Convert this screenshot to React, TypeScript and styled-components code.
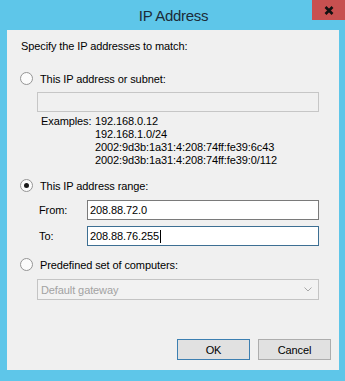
import { FC } from 'react'
import styled, { createGlobalStyle } from 'styled-components'

const GlobalStyle = createGlobalStyle`
  html, body {
    margin: 0;
    padding: 0;
    background: #5ec6e9;
  }
  body {
    font-family: 'Liberation Sans', Arial, sans-serif;
    font-size: 11px;
    letter-spacing: -0.1px;
    color: #000;
  }
`

const Frame = styled.div`
  width: 345px;
  height: 381px;
  background: #5ec6e9;
  display: flex;
  flex-direction: column;
  overflow: hidden;
`

const TitleBar = styled.div`
  height: 30px;
  display: grid;
  grid-template-columns: 1fr auto 1fr;
  align-items: start;
`

const Title = styled.div`
  grid-column: 2;
  font-size: 15px;
  letter-spacing: -0.3px;
  line-height: 15px;
  padding-top: 8px;
  padding-left: 2px;
  color: #1c2b38;
`

const CloseButton = styled.div`
  grid-column: 3;
  justify-self: end;
  width: 33px;
  height: 20px;
  background: #c75050;
  display: flex;
  align-items: center;
  justify-content: center;
`

const Panel = styled.div`
  margin-left: 7px;
  width: 332px;
  height: 340px;
  background: #f0f0f0;
  display: flex;
  flex-direction: column;
  padding-top: 9px;
  box-sizing: border-box;
`

const Text = styled.div<{ $indent?: number; $top?: number }>`
  line-height: 15px;
  margin-left: ${(p) => p.$indent ?? 0}px;
  margin-top: ${(p) => p.$top ?? 0}px;
  white-space: nowrap;
`

const RadioRow = styled.div<{ $top: number }>`
  display: flex;
  align-items: center;
  gap: 7px;
  height: 15px;
  margin-top: ${(p) => p.$top}px;
  margin-left: 13px;
  white-space: nowrap;
`

const RadioCircle = styled.span<{ $checked?: boolean }>`
  width: 13px;
  height: 13px;
  box-sizing: border-box;
  border: 1px solid #959595;
  border-radius: 50%;
  background: #fbfbfb;
  display: flex;
  align-items: center;
  justify-content: center;
  &::after {
    content: '';
    display: ${(p) => (p.$checked ? 'block' : 'none')};
    width: 5px;
    height: 5px;
    border-radius: 50%;
    background: #1a1a1a;
  }
`

const Field = styled.div<{ $variant?: 'disabled' | 'normal' | 'focused'; $top: number; $width: number }>`
  box-sizing: border-box;
  width: ${(p) => p.$width}px;
  height: 20px;
  margin-top: ${(p) => p.$top}px;
  border: 1px solid
    ${(p) =>
      p.$variant === 'focused' ? '#3d6f93' : p.$variant === 'normal' ? '#7a7a7a' : '#c6c6c6'};
  background: ${(p) => (p.$variant === 'disabled' ? '#f0f0f0' : '#ffffff')};
  display: flex;
  align-items: center;
  padding-left: 2px;
  white-space: nowrap;
`

const Caret = styled.span`
  display: inline-block;
  width: 1px;
  height: 13px;
  background: #000;
  margin-left: 1px;
`

const Examples = styled.div`
  display: grid;
  grid-template-columns: 54px auto;
  margin-left: 34px;
  margin-top: 3px;
  line-height: 13px;
`

const ExampleList = styled.div`
  display: flex;
  flex-direction: column;
`

const FormRow = styled.div<{ $top: number }>`
  display: flex;
  align-items: center;
  margin-top: ${(p) => p.$top}px;
  margin-left: 32px;
`

const FormLabel = styled.span`
  width: 48px;
`

const Indented = styled.div`
  margin-left: 30px;
`

const Combo = styled.div`
  box-sizing: border-box;
  width: 282px;
  height: 21px;
  margin-top: 7px;
  margin-left: 30px;
  border: 1px solid #c4c4c4;
  background: #f2f2f2;
  color: #a2a2a2;
  display: flex;
  align-items: center;
  justify-content: space-between;
  padding: 0 6px 0 3px;
`

const ButtonRow = styled.div`
  display: flex;
  justify-content: flex-end;
  gap: 8px;
  margin-top: 39px;
  padding-right: 8px;
`

const Button = styled.div<{ $default?: boolean }>`
  box-sizing: border-box;
  width: 73px;
  height: 21px;
  background: #e1e1e1;
  border: 1px solid ${(p) => (p.$default ? '#3c7fb1' : '#adadad')};
  display: flex;
  align-items: center;
  justify-content: center;
`

const App: FC = () => {
  return (
    <Frame>
      <GlobalStyle />
      <TitleBar>
        <Title>IP Address</Title>
        <CloseButton>
          <svg width="10" height="9" viewBox="0 0 10 9">
            <path d="M1.5 1 L8.5 8 M8.5 1 L1.5 8" stroke="#111" strokeWidth="2.6" />
          </svg>
        </CloseButton>
      </TitleBar>
      <Panel>
        <Text $indent={14}>Specify the IP addresses to match:</Text>

        <RadioRow $top={17}>
          <RadioCircle />
          <span>This IP address or subnet:</span>
        </RadioRow>
        <Indented>
          <Field $variant="disabled" $top={6} $width={282} />
        </Indented>
        <Examples>
          <span>Examples:</span>
          <ExampleList>
            <span>192.168.0.12</span>
            <span>192.168.1.0/24</span>
            <span>2002:9d3b:1a31:4:208:74ff:fe39:6c43</span>
            <span>2002:9d3b:1a31:4:208:74ff:fe39:0/112</span>
          </ExampleList>
        </Examples>

        <RadioRow $top={11}>
          <RadioCircle $checked />
          <span>This IP address range:</span>
        </RadioRow>
        <FormRow $top={7}>
          <FormLabel>From:</FormLabel>
          <Field $variant="normal" $top={0} $width={232}>
            208.88.72.0
          </Field>
        </FormRow>
        <FormRow $top={6}>
          <FormLabel>To:</FormLabel>
          <Field $variant="focused" $top={0} $width={232}>
            208.88.76.255
            <Caret />
          </Field>
        </FormRow>

        <RadioRow $top={11}>
          <RadioCircle />
          <span>Predefined set of computers:</span>
        </RadioRow>
        <Combo>
          <span>Default gateway</span>
          <svg width="8" height="5" viewBox="0 0 8 5">
            <path d="M0.5 0.5 L4 4 L7.5 0.5" stroke="#a8a8a8" strokeWidth="1" fill="none" />
          </svg>
        </Combo>

        <ButtonRow>
          <Button $default>OK</Button>
          <Button>Cancel</Button>
        </ButtonRow>
      </Panel>
    </Frame>
  )
}

export default App
